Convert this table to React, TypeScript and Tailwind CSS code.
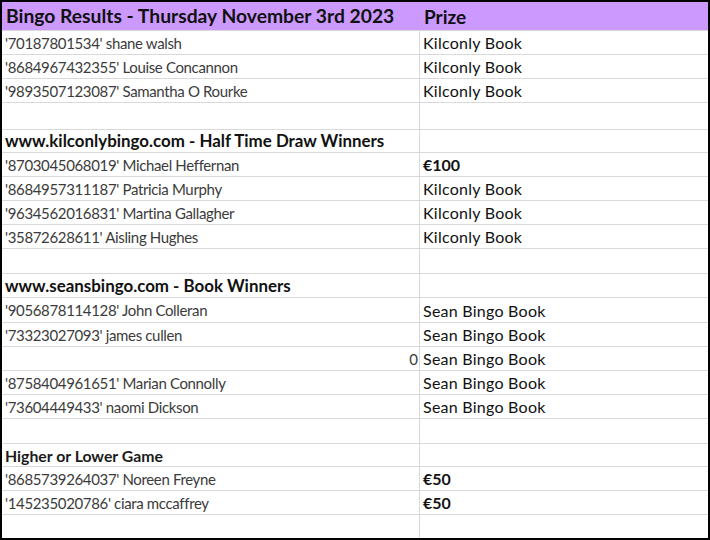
import React from "react"

type Row = {
  h: string
  left?: string
  right?: string
  kind?: "section" | "small-section" | "num"
  bold?: boolean
}

const rows: Row[] = [
  { h: "h-[24px]", left: "'70187801534' shane walsh", right: "Kilconly Book" },
  { h: "h-[24px]", left: "'8684967432355' Louise Concannon", right: "Kilconly Book" },
  { h: "h-[24px]", left: "'9893507123087' Samantha O Rourke", right: "Kilconly Book" },
  { h: "h-[27px]" },
  { h: "h-[23px]", left: "www.kilconlybingo.com - Half Time Draw Winners", kind: "section" },
  { h: "h-[24px]", left: "'8703045068019' Michael Heffernan", right: "€100", bold: true },
  { h: "h-[24px]", left: "'8684957311187' Patricia Murphy", right: "Kilconly Book" },
  { h: "h-[24px]", left: "'9634562016831' Martina Gallagher", right: "Kilconly Book" },
  { h: "h-[24px]", left: "'35872628611' Aisling Hughes", right: "Kilconly Book" },
  { h: "h-[25px]" },
  { h: "h-[24px]", left: "www.seansbingo.com - Book Winners", kind: "section" },
  { h: "h-[25px]", left: "'9056878114128' John Colleran", right: "Sean Bingo Book" },
  { h: "h-[24px]", left: "'73323027093' james cullen", right: "Sean Bingo Book" },
  { h: "h-[24px]", left: "0", kind: "num", right: "Sean Bingo Book" },
  { h: "h-[24px]", left: "'8758404961651' Marian Connolly", right: "Sean Bingo Book" },
  { h: "h-[24px]", left: "'73604449433' naomi Dickson", right: "Sean Bingo Book" },
  { h: "h-[25px]" },
  { h: "h-[23px]", left: "Higher or Lower Game", kind: "small-section" },
  { h: "h-[24px]", left: "'8685739264037' Noreen Freyne", right: "€50", bold: true },
  { h: "h-[24px]", left: "'145235020786' ciara mccaffrey", right: "€50", bold: true },
  { h: "h-[24px]" },
]

function ResultRow({ row }: { row: Row }) {
  const leftClass =
    row.kind === "section"
      ? "font-bold text-[16.9px] text-[#111111] justify-start"
      : row.kind === "small-section"
        ? "font-bold text-[15.8px] text-[#1a1a1a] justify-start"
        : row.kind === "num"
          ? "text-[15px] text-[#3b3b3b] justify-end pr-[1px]"
          : "text-[15px] tracking-[-0.35px] text-[#3b3b3b] justify-start"

  const rightClass = row.bold
    ? "font-bold text-[16px]"
    : "text-[16px] tracking-[0.25px]"

  return (
    <div className={`flex border-t border-[#d9d9d9] ${row.h}`}>
      <div className={`flex w-[418px] items-center border-r border-[#d9d9d9] pl-[3px] pt-[1px] ${leftClass}`}>
        {row.left}
      </div>
      <div className={`flex flex-1 items-center pl-[3px] pt-[1px] text-[#111111] ${rightClass}`}>
        {row.right}
      </div>
    </div>
  )
}

export default function App() {
  return (
    <div className="w-[710px] h-[540px] bg-black p-[2px] font-['Lato',sans-serif] leading-none">
      <div className="flex h-full flex-col bg-white">
        {/* Title row */}
        <div className="flex h-[28px] items-center bg-[#cc99ff] text-[19.3px] font-bold text-[#111111]">
          <div className="w-[418px] pl-[4px]">Bingo Results - Thursday November 3rd 2023</div>
          <div className="pl-[4px] text-[19px]">Prize</div>
        </div>

        {rows.map((row, i) => (
          <ResultRow key={i} row={row} />
        ))}
      </div>
    </div>
  )
}
